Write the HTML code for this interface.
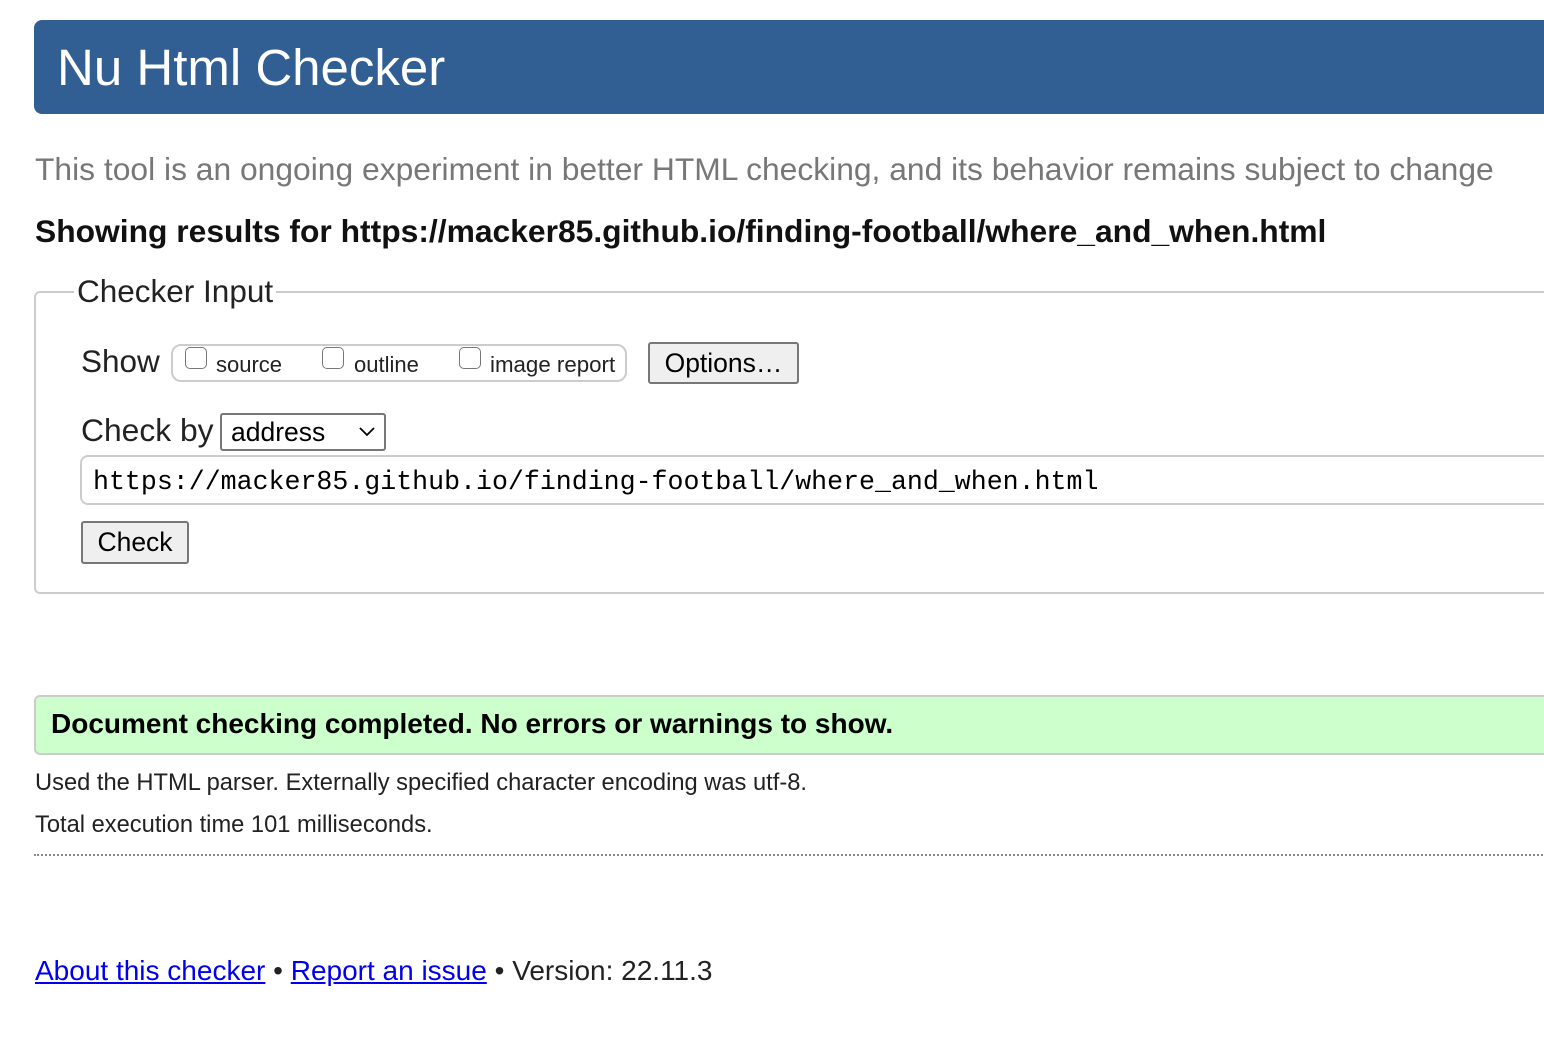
<!DOCTYPE html>
<html><head><meta charset="utf-8"><style>
body{margin:0;width:1544px;height:1040px;overflow:hidden;background:#fff;font-family:"Liberation Sans",Arial,sans-serif;color:#222;position:relative}
.a{position:absolute;white-space:nowrap}
.hdr{left:34px;top:20px;width:1540px;height:94px;background:#315f93;border-radius:8px 0 0 8px}
.cb{display:inline-block;width:22px;height:22px;border:1.5px solid #777;border-radius:5px;box-sizing:border-box;background:#fff;vertical-align:-2px}
.btn{background:#efefef;border:2px solid #777;border-radius:3px;box-sizing:border-box;color:#000}
</style></head><body>
<div class="a hdr"></div>
<div class="a" style="left:57px;top:37px;font-size:51px;color:#fff;line-height:62px">Nu Html Checker</div>
<div class="a" style="left:35px;top:150px;font-size:31.8px;color:#777;line-height:38px">This tool is an ongoing experiment in better HTML checking, and its behavior remains subject to change</div>
<div class="a" style="left:35px;top:212px;font-size:31.8px;font-weight:bold;color:#111;line-height:38px">Showing results for https://macker85.github.io/finding-football/where_and_when.html</div>
<div class="a" style="left:34px;top:291px;width:1540px;height:303px;border:2px solid #ccc;border-radius:6px;box-sizing:border-box"></div>
<div class="a" style="left:74px;top:272px;font-size:31.5px;background:#fff;padding:0 3px;line-height:38px;color:#222">Checker Input</div>
<div class="a" style="left:81px;top:342px;font-size:31.5px;line-height:38px">Show</div>
<div class="a" style="left:171px;top:344px;width:456px;height:38px;border:2px solid #ccc;border-radius:10px;box-sizing:border-box"></div>
<div class="a cb" style="left:185px;top:347px"></div>
<div class="a" style="left:216px;top:351px;font-size:22px;line-height:28px">source</div>
<div class="a cb" style="left:322px;top:347px"></div>
<div class="a" style="left:354px;top:351px;font-size:22px;line-height:28px">outline</div>
<div class="a cb" style="left:459px;top:347px"></div>
<div class="a" style="left:490px;top:351px;font-size:22.3px;line-height:28px">image report</div>
<div class="a btn" style="left:648px;top:342px;width:151px;height:42px;font-size:26.5px;line-height:38px;text-align:center">Options…</div>
<div class="a" style="left:81px;top:411px;font-size:31.8px;line-height:38px">Check by</div>
<div class="a" style="left:220px;top:413px;width:166px;height:38px;border:2px solid #777;border-radius:3px;box-sizing:border-box;font-size:26.5px;line-height:34px;padding-left:9px;color:#000">address<svg style="position:absolute;right:9px;top:12px" width="16" height="10" viewBox="0 0 16 10"><path d="M1 1 L8 8 L15 1" fill="none" stroke="#000" stroke-width="1.8"/></svg></div>
<div class="a" style="left:80px;top:455px;width:1500px;height:50px;border:2px solid #ccc;border-radius:8px;box-sizing:border-box"></div>
<div class="a" style="left:93px;top:465px;font-family:'Liberation Mono','DejaVu Sans Mono',monospace;font-size:26.6px;line-height:34px;color:#000">https://macker85.github.io/finding-football/where_and_when.html</div>
<div class="a btn" style="left:81px;top:521px;width:108px;height:43px;font-size:26.5px;line-height:39px;text-align:center">Check</div>
<div class="a" style="left:34px;top:695px;width:1540px;height:60px;background:#ccffcc;border:2px solid #ccc;border-radius:6px;box-sizing:border-box"></div>
<div class="a" style="left:51px;top:707px;font-size:28px;font-weight:bold;color:#000;line-height:34px">Document checking completed. No errors or warnings to show.</div>
<div class="a" style="left:35px;top:769px;font-size:23.7px;line-height:28px">Used the HTML parser. Externally specified character encoding was utf-8.</div>
<div class="a" style="left:35px;top:811px;font-size:23.7px;line-height:28px">Total execution time 101 milliseconds.</div>
<div class="a" style="left:34px;top:854px;width:1520px;border-top:2px dotted #888"></div>
<div class="a" style="left:35px;top:954px;font-size:28px;line-height:34px"><span style="color:#00e;text-decoration:underline">About this checker</span> • <span style="color:#00e;text-decoration:underline">Report an issue</span> • Version: 22.11.3</div>
</body></html>
